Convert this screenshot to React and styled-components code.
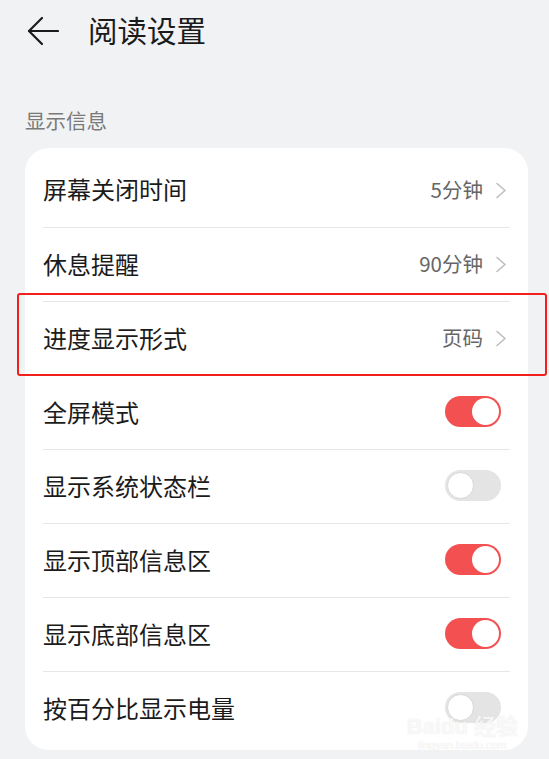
import React from 'react'
import styled, { createGlobalStyle } from 'styled-components'

const Global = createGlobalStyle`
  html, body {
    margin: 0;
    padding: 0;
    background: #f1f2f4;
    font-family: "Noto Sans CJK SC", "Noto Sans", sans-serif;
  }
`

const Page = styled.div`
  position: relative;
  width: 549px;
  height: 759px;
  overflow: hidden;
  background: #f1f2f4;
`

const Header = styled.div`
  display: flex;
  align-items: center;
  height: 60px;
  padding-left: 27px;
`

const Back = styled.svg`
  width: 32px;
  height: 30px;
  margin-right: 29px;
  margin-top: 2px;
`

const Title = styled.h1`
  margin: 0;
  font-size: 29.5px;
  font-weight: 400;
  color: #1b1b1b;
  line-height: 1;
`

const SectionLabel = styled.div`
  margin: 46px 0 0 25px;
  font-size: 20.5px;
  line-height: 28px;
  color: #7a7a7a;
`

const Card = styled.div`
  margin: 14px 0 0 25px;
  width: 503px;
  box-sizing: border-box;
  padding: 5px 18px;
  background: #fff;
  border-radius: 24px;
`

const Row = styled.div`
  display: flex;
  align-items: center;
  height: 74px;
  box-sizing: border-box;
  border-top: ${({ first }) => (first ? 'none' : '1px solid #e6e6e6')};
`

const Label = styled.div`
  flex: 1;
  font-size: 24px;
  color: #1b1b1b;
  padding-bottom: 3px;
`

const Value = styled.div`
  font-size: 20.5px;
  color: #666;
  margin-right: 12px;
  padding-bottom: 3px;
`

const Chevron = styled.svg`
  width: 12px;
  height: 17px;
  margin-right: 3px;
`

const Toggle = styled.div`
  position: relative;
  width: 56px;
  height: 31px;
  border-radius: 16px;
  background: ${({ on }) => (on ? '#f35052' : '#e4e4e4')};
  margin-right: 9px;
  margin-bottom: 2px;
`

const Knob = styled.div`
  position: absolute;
  top: 2px;
  left: ${({ on }) => (on ? '27px' : '2px')};
  width: 27px;
  height: 27px;
  box-sizing: border-box;
  border-radius: 50%;
  background: #fff;
  border: ${({ on }) => (on ? 'none' : '1px solid #d8d8d8')};
`

const Highlight = styled.div`
  position: absolute;
  left: 17px;
  top: 293px;
  width: 530px;
  height: 83px;
  box-sizing: border-box;
  border: 2px solid #f2201c;
  border-radius: 3px;
  pointer-events: none;
`

const Watermark = styled.div`
  position: absolute;
  right: 31px;
  bottom: 8px;
  display: flex;
  flex-direction: column;
  align-items: center;
  font-family: "Liberation Sans", "Noto Sans CJK SC", sans-serif;
  color: rgba(255, 255, 255, 0.8);
  text-shadow: 0 0 1px rgba(170, 170, 170, 0.35);
  pointer-events: none;
`

const MarkTop = styled.div`
  font-size: 22px;
  font-weight: 700;
  line-height: 24px;
`

const MarkBottom = styled.div`
  font-size: 11px;
  line-height: 12px;
`

const items = [
  { label: '屏幕关闭时间', value: '5分钟' },
  { label: '休息提醒', value: '90分钟' },
  { label: '进度显示形式', value: '页码' },
  { label: '全屏模式', toggle: true },
  { label: '显示系统状态栏', toggle: false },
  { label: '显示顶部信息区', toggle: true },
  { label: '显示底部信息区', toggle: true },
  { label: '按百分比显示电量', toggle: false },
]

export default function App() {
  return (
    <Page>
      <Global />
      <Header>
        <Back viewBox="0 0 32 30" fill="none" stroke="#1b1b1b" strokeWidth="2.2" strokeLinecap="round" strokeLinejoin="round">
          <path d="M2 15 H31" />
          <path d="M15 2 L2 15 L15 28" />
        </Back>
        <Title>阅读设置</Title>
      </Header>
      <SectionLabel>显示信息</SectionLabel>
      <Card>
        {items.map((it, i) => (
          <Row key={it.label} first={i === 0}>
            <Label>{it.label}</Label>
            {it.value !== undefined ? (
              <>
                <Value>{it.value}</Value>
                <Chevron viewBox="0 0 12 17" fill="none" stroke="#bdbdbd" strokeWidth="1.6" strokeLinecap="round" strokeLinejoin="round">
                  <path d="M2 1.5 L10 8.5 L2 15.5" />
                </Chevron>
              </>
            ) : (
              <Toggle on={it.toggle}>
                <Knob on={it.toggle} />
              </Toggle>
            )}
          </Row>
        ))}
      </Card>
      <Highlight />
      <Watermark>
        <MarkTop>Baidu 经验</MarkTop>
        <MarkBottom>jingyan.baidu.com</MarkBottom>
      </Watermark>
    </Page>
  )
}
